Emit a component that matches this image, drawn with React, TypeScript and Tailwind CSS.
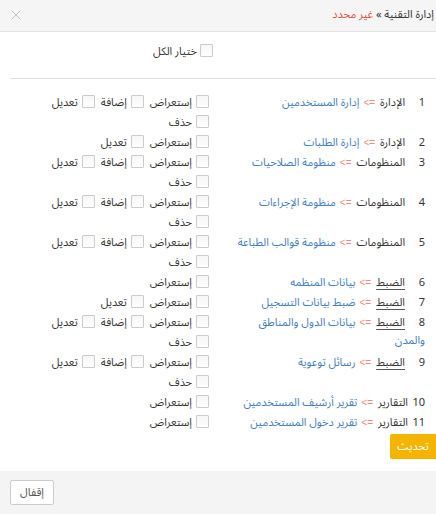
import React from 'react';

type Row = {
  n: string;
  nw: string;
  cat: string;
  u?: boolean;
  link: string;
  link2?: string;
  perms: string[][];
};

const FULL = [['إستعراض', 'إضافة', 'تعديل'], ['حذف']];

const rows: Row[] = [
  { n: '1', nw: 'w-[20px]', cat: 'الإدارة', link: 'إدارة المستخدمين', perms: FULL },
  { n: '2', nw: 'w-[20px]', cat: 'الإدارة', link: 'إدارة الطلبات', perms: [['إستعراض', 'تعديل']] },
  { n: '3', nw: 'w-[20px]', cat: 'المنظومات', link: 'منظومة الصلاحيات', perms: FULL },
  { n: '4', nw: 'w-[20px]', cat: 'المنظومات', link: 'منظومة الإجراءات', perms: FULL },
  { n: '5', nw: 'w-[20px]', cat: 'المنظومات', link: 'منظومة قوالب الطباعة', perms: FULL },
  { n: '6', nw: 'w-[20px]', cat: 'الضبط', u: true, link: 'بيانات المنظمه', perms: [['إستعراض']] },
  { n: '7', nw: 'w-[20px]', cat: 'الضبط', u: true, link: 'ضبط بيانات التسجيل', perms: [['إستعراض', 'تعديل']] },
  { n: '8', nw: 'w-[20px]', cat: 'الضبط', u: true, link: 'بيانات الدول والمناطق', link2: 'والمدن', perms: FULL },
  { n: '9', nw: 'w-[20px]', cat: 'الضبط', u: true, link: 'رسائل توعوية', perms: FULL },
  { n: '10', nw: 'w-[17px]', cat: 'التقارير', link: 'تقرير أرشيف المستخدمين', perms: [['إستعراض']] },
  { n: '11', nw: 'w-[17px]', cat: 'التقارير', link: 'تقرير دخول المستخدمين', perms: [['إستعراض']] },
];

function Box() {
  return (
    <span className="inline-block w-[13px] h-[13px] shrink-0 border border-[#cbcbcb] bg-gradient-to-b from-[#f6f6f6] to-white rounded-[1px]" />
  );
}

export default function App() {
  return (
    <div
      dir="rtl"
      className="w-[436px] h-[514px] flex flex-col bg-white text-[11px] text-[#333] font-['Noto_Sans','Noto_Sans_Arabic_UI',sans-serif] overflow-hidden"
    >
      {/* header */}
      <div className="h-[32px] shrink-0 bg-[#f5f5f5] border-b border-[#e3e3e3] flex items-center justify-between pr-[2px] pl-[11px]">
        <div className="whitespace-nowrap leading-[16px] mt-[-4px]">
          <span>إدارة التقنية</span>
          <span> » </span>
          <span className="text-[#e0513f]">غير محدد</span>
        </div>
        <svg width="10" height="10" viewBox="0 0 10 10" className="mt-[-2px]">
          <path d="M0.5 0.5 L9.5 9.5 M9.5 0.5 L0.5 9.5" stroke="#c4c4c4" strokeWidth="1" />
        </svg>
      </div>

      {/* body */}
      <div className="flex-1 flex flex-col pl-[10px]">
        <div className="h-[36px] flex items-center pr-[223px] gap-[3px]">
          <Box />
          <span className="whitespace-nowrap leading-[16px] mt-[1px]">ختيار الكل</span>
        </div>
        <div className="mt-[10px] border-t border-[#dedede]" />
        <div className="pt-[12px] flex flex-col">
          {rows.map((r) => (
            <div key={r.n} className="flex">
              <div className="w-[211px] shrink-0 pr-[11px] pt-[2px] leading-[17px] whitespace-nowrap">
                <span className={`inline-block ${r.nw}`}>{r.n}</span>
                <span className={r.u ? 'underline decoration-[#555] underline-offset-[3px]' : ''}>{r.cat}</span>
                <span dir="ltr" className="mr-[5px] ml-[4px] text-[10px] text-[#f2897a] font-['Liberation_Sans',sans-serif]">
                  {'<='}
                </span>
                <span className="text-[#3f7ebe]">{r.link}</span>
                {r.link2 ? (
                  <>
                    <br />
                    <span className="text-[#3f7ebe]">{r.link2}</span>
                  </>
                ) : null}
              </div>
              <div className="flex-1 flex flex-col pr-[16px]">
                {r.perms.map((line, i) => (
                  <div key={i} className="h-[20px] flex items-center gap-[6px]">
                    {line.map((p) => (
                      <span key={p} className="flex items-center gap-[4px] whitespace-nowrap">
                        <Box />
                        <span className="leading-[16px] mt-[1px]">{p}</span>
                      </span>
                    ))}
                  </div>
                ))}
              </div>
            </div>
          ))}
        </div>
        <div className="mt-[3px] flex">
          <button className="w-[46px] h-[25px] bg-[#f4b400] text-white rounded-r-none rounded-l-[2px] text-[11px] flex items-center justify-center">
            تحديث
          </button>
        </div>
      </div>

      {/* footer */}
      <div className="h-[43px] shrink-0 bg-[#f4f4f4] flex items-start justify-end pl-[10px] pt-[9px]">
        <button className="w-[44px] h-[25px] bg-white border border-[#cccccc] rounded-[2px] text-[11px] text-[#555] flex items-center justify-center">
          إقفال
        </button>
      </div>
    </div>
  );
}
